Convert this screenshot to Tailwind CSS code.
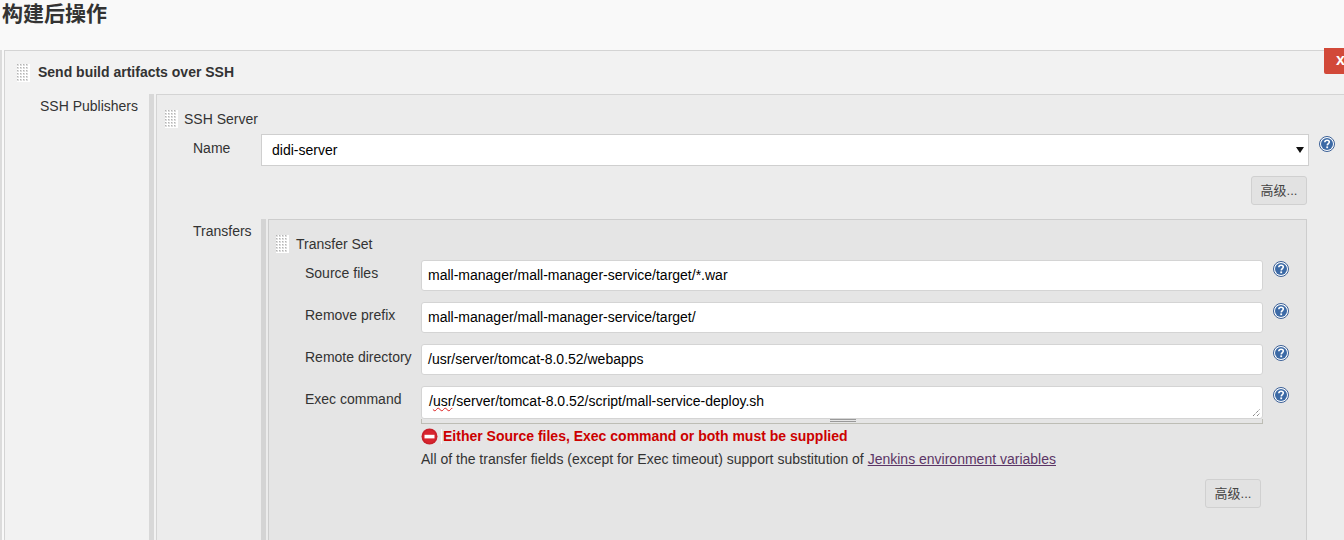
<!DOCTYPE html>
<html lang="en">
<head>
    <meta charset="UTF-8">
    <title>构建后操作</title>
    <script src="https://cdn.jsdelivr.net/npm/@tailwindcss/browser@4"></script>
</head>
<body class="bg-[#f9f9f9] text-[#333] text-[14px] leading-[19px] font-['Liberation_Sans','Noto_Sans_CJK_SC',sans-serif] overflow-hidden">
<!-- shared icons -->
<svg class="absolute h-0 w-0">
    <defs>
        <pattern id="dots" width="3" height="3" patternUnits="userSpaceOnUse">
            <rect width="2" height="2" fill="#dcdcdc"/>
            <rect width="1" height="1" fill="#b4b4b4"/>
        </pattern>
        <symbol id="grip" viewBox="0 0 13 18">
            <rect width="13" height="18" fill="#fff"/>
            <rect width="12" height="18" fill="url(#dots)"/>
        </symbol>
        <symbol id="help" viewBox="0 0 16 16">
            <circle cx="8" cy="8" r="7.5" fill="#fff" stroke="#3a5f96"/>
            <circle cx="8" cy="8" r="6" fill="#3c6aa6"/>
            <path d="M5.8 6.3C5.9 4.9 6.8 4.2 8.1 4.2 9.4 4.2 10.3 5 10.3 6.1 10.3 7.6 8.3 7.7 8.2 9.4" fill="none" stroke="#fff" stroke-width="1.6"/>
            <rect x="7.3" y="10.4" width="1.8" height="1.8" fill="#fff"/>
        </symbol>
    </defs>
</svg>

<div class="w-[1344px] h-[540px] overflow-hidden">
    <!-- Section title -->
    <h2 class="h-[50px] pl-[2px] text-[21px] leading-[28px] font-bold text-[#333]">构建后操作</h2>

    <div class="flex h-[490px]">
        <div class="w-[2px] bg-[#dcdcdc]"></div>
        <div class="w-[2px]"></div>

        <!-- Send build artifacts -->
        <div class="relative flex-1 border-l border-t border-[#d4d4d4] bg-[#f2f2f2]">
            <div class="absolute right-0 top-[-3px] h-[26px] w-[20px] rounded-bl-[2px] bg-[#d24939] pl-[12px] pt-[2px] text-[16px] font-bold leading-[19px] text-white">x</div>

            <div class="flex h-[43px] items-center pl-[12px]">
                <svg class="mr-[8px] h-[18px] w-[13px]"><use href="#grip"></use></svg>
                <span class="font-bold">Send build artifacts over SSH</span>
            </div>

            <div class="flex h-full">
                <div class="w-[144px] pr-[11px] pt-[3px] text-right">SSH Publishers</div>
                <div class="w-[5px] bg-[#d8d8d8]"></div>
                <div class="w-[2px]"></div>

                <!-- SSH Server -->
                <div class="flex-1 border-l border-t border-[#d4d4d4] bg-[#ececec]">
                    <div class="flex h-[39px] items-center pl-[8px] pt-[9px]">
                        <svg class="mr-[6px] h-[18px] w-[13px]"><use href="#grip"></use></svg>
                        <span>SSH Server</span>
                    </div>

                    <div class="flex h-[32px]">
                        <div class="w-[104px] pl-[36px] pt-[5px]">Name</div>
                        <div class="relative h-[32px] w-[1048px] border border-[#cfcfcf] bg-white pl-[10px] pt-[6px] text-black">
                            didi-server
                            <svg class="absolute right-[4px] top-[12px] h-[6px] w-[8px]" viewBox="0 0 8 6"><path d="M0 0h8L4 6z" fill="#111"/></svg>
                        </div>
                        <svg class="ml-[10px] mt-[2px] h-[16px] w-[16px]"><use href="#help"></use></svg>
                    </div>

                    <div class="mt-[10px] flex w-[1150px] justify-end">
                        <div class="flex h-[29px] w-[56px] items-center justify-center rounded-[3px] border border-[#d0d0d0] bg-[#e2e2e2] text-[13px] text-[#444]">高级...</div>
                    </div>

                    <div class="mt-[14px] flex">
                        <div class="w-[94px] pl-[36px] pt-[3px]">Transfers</div>
                        <div class="ml-[10px] w-[5px] bg-[#d4d4d4]"></div>
                        <div class="w-[2px]"></div>

                        <!-- Transfer Set -->
                        <div class="h-[321px] w-[1039px] border-l border-r border-t border-[#cdcdcd] bg-[#e5e5e5]">
                            <div class="flex h-[40px] items-center pl-[7px] pt-[8px]">
                                <svg class="mr-[7px] h-[18px] w-[13px]"><use href="#grip"></use></svg>
                                <span>Transfer Set</span>
                            </div>

                            <div class="flex h-[42px]">
                                <div class="w-[152px] pl-[36px] pt-[4px]">Source files</div>
                                <div class="h-[31px] w-[842px] rounded-[3px] border border-[#d4d4d4] bg-white pl-[6px] pt-[5px] text-black">mall-manager/mall-manager-service/target/*.war</div>
                                <svg class="ml-[10px] mt-[1px] h-[16px] w-[16px]"><use href="#help"></use></svg>
                            </div>
                            <div class="flex h-[42px]">
                                <div class="w-[152px] pl-[36px] pt-[4px]">Remove prefix</div>
                                <div class="h-[31px] w-[842px] rounded-[3px] border border-[#d4d4d4] bg-white pl-[6px] pt-[5px] text-black">mall-manager/mall-manager-service/target/</div>
                                <svg class="ml-[10px] mt-[1px] h-[16px] w-[16px]"><use href="#help"></use></svg>
                            </div>
                            <div class="flex h-[42px]">
                                <div class="w-[152px] pl-[36px] pt-[4px]">Remote directory</div>
                                <div class="h-[31px] w-[842px] rounded-[3px] border border-[#d4d4d4] bg-white pl-[6px] pt-[5px] text-black">/usr/server/tomcat-8.0.52/webapps</div>
                                <svg class="ml-[10px] mt-[1px] h-[16px] w-[16px]"><use href="#help"></use></svg>
                            </div>
                            <div class="flex h-[42px]">
                                <div class="w-[152px] pl-[36px] pt-[4px]">Exec command</div>
                                <div class="w-[842px]">
                                    <div class="relative h-[33px] rounded-[3px] border border-[#d4d4d4] bg-white pl-[7px] pt-[5px] text-black">
                                        /<span class="underline decoration-wavy decoration-[#d22] decoration-1">usr</span>/server/tomcat-8.0.52/script/mall-service-deploy.sh
                                        <svg class="absolute bottom-[1px] right-[1px] h-[9px] w-[9px]" viewBox="0 0 9 9"><path d="M1 8L8 1M5 8L8 5" stroke="#555" stroke-dasharray="1 1" fill="none"/></svg>
                                    </div>
                                    <div class="flex h-[5px] justify-center border-b border-x border-[#bdbdb5] bg-[#e5e5e5] pl-[2px]">
                                        <div class="h-[3px] w-[26px] border-y border-[#999]"></div>
                                    </div>
                                </div>
                                <svg class="ml-[10px] mt-[1px] h-[16px] w-[16px]"><use href="#help"></use></svg>
                            </div>

                            <div class="ml-[152px] mt-[-2px]">
                                <div class="flex h-[20px] items-center">
                                    <svg class="mr-[3px] h-[17px] w-[17px]" viewBox="0 0 17 17"><circle cx="8.5" cy="8.5" r="8" fill="#c9202a"/><circle cx="8.5" cy="8.5" r="6.5" fill="#d8252f"/><rect x="3.5" y="6.8" width="10" height="3.6" fill="#fff"/></svg>
                                    <div class="mr-[1px] h-[15px] w-[1px] bg-white/70"></div>
                                    <span class="font-bold text-[#cc0000]">Either Source files, Exec command or both must be supplied</span>
                                </div>
                                <div class="mt-[4px]">All of the transfer fields (except for Exec timeout) support substitution of <a href="#" class="text-[#5c3566] underline">Jenkins environment variables</a></div>
                            </div>

                            <div class="mt-[10px] flex w-[992px] justify-end">
                                <div class="flex h-[29px] w-[56px] items-center justify-center rounded-[3px] border border-[#d0d0d0] bg-[#e2e2e2] text-[13px] text-[#444]">高级...</div>
                            </div>
                        </div>
                    </div>
                </div>
            </div>
        </div>
    </div>
</div>
</body>
</html>
